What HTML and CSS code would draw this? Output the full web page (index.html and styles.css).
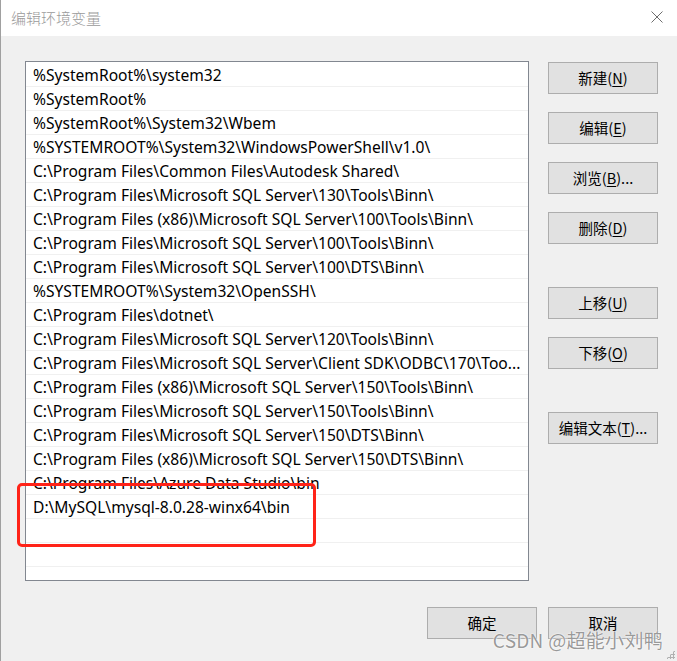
FILE: index.html
```html
<!DOCTYPE html>
<html lang="zh-CN">
<head>
<meta charset="utf-8">
<title>编辑环境变量</title>
<link rel="stylesheet" href="styles.css">
</head>
<body>
<div class="window">
  <div class="titlebar">
    <span class="title">编辑环境变量</span>
    <svg class="close" width="12" height="12" viewBox="0 0 12 12"><path d="M0.5 0.5 L11.5 11.5 M11.5 0.5 L0.5 11.5" stroke="#6e6e6e" stroke-width="1" fill="none"/></svg>
  </div>
  <div class="content">
    <div class="main">
      <div class="list">
        <div class="row">%SystemRoot%\system32</div>
        <div class="row">%SystemRoot%</div>
        <div class="row">%SystemRoot%\System32\Wbem</div>
        <div class="row">%SYSTEMROOT%\System32\WindowsPowerShell\v1.0\</div>
        <div class="row">C:\Program Files\Common Files\Autodesk Shared\</div>
        <div class="row">C:\Program Files\Microsoft SQL Server\130\Tools\Binn\</div>
        <div class="row">C:\Program Files (x86)\Microsoft SQL Server\100\Tools\Binn\</div>
        <div class="row">C:\Program Files\Microsoft SQL Server\100\Tools\Binn\</div>
        <div class="row">C:\Program Files\Microsoft SQL Server\100\DTS\Binn\</div>
        <div class="row">%SYSTEMROOT%\System32\OpenSSH\</div>
        <div class="row">C:\Program Files\dotnet\</div>
        <div class="row">C:\Program Files\Microsoft SQL Server\120\Tools\Binn\</div>
        <div class="row">C:\Program Files\Microsoft SQL Server\Client SDK\ODBC\170\Too...</div>
        <div class="row">C:\Program Files (x86)\Microsoft SQL Server\150\Tools\Binn\</div>
        <div class="row">C:\Program Files\Microsoft SQL Server\150\Tools\Binn\</div>
        <div class="row">C:\Program Files\Microsoft SQL Server\150\DTS\Binn\</div>
        <div class="row">C:\Program Files (x86)\Microsoft SQL Server\150\DTS\Binn\</div>
        <div class="row">C:\Program Files\Azure Data Studio\bin</div>
        <div class="row">D:\MySQL\mysql-8.0.28-winx64\bin</div>
        <div class="row"></div>
        <div class="row"></div>
        <div class="row"></div>
      </div>
      <div class="side">
        <div class="group">
          <button class="btn">新建(<u>N</u>)</button>
          <button class="btn">编辑(<u>E</u>)</button>
          <button class="btn">浏览(<u>B</u>)...</button>
          <button class="btn">删除(<u>D</u>)</button>
        </div>
        <div class="group">
          <button class="btn">上移(<u>U</u>)</button>
          <button class="btn">下移(<u>O</u>)</button>
        </div>
        <div class="group">
          <button class="btn">编辑文本(<u>T</u>)...</button>
        </div>
      </div>
    </div>
    <div class="footer">
      <button class="btn">确定</button>
      <button class="btn">取消</button>
    </div>
  </div>
  <div class="highlight"></div>
  <div class="watermark">CSDN @超能小刘鸭</div>
  <div class="grip"></div>
</div>
</body>
</html>
```

FILE: styles.css
```css
* { box-sizing: border-box; }
html, body { margin: 0; padding: 0; }
body {
  width: 677px;
  height: 661px;
  overflow: hidden;
  background: #f0f0f0;
  font-family: "Noto Sans", "Noto Sans CJK SC", sans-serif;
}
.window {
  position: relative;
  width: 677px;
  height: 661px;
  background: #f0f0f0;
  border-left: 1px solid #a0a0a0;
}
.titlebar {
  height: 36px;
  background: #ffffff;
  display: flex;
  align-items: center;
  justify-content: space-between;
  padding: 0 14px 0 10px;
}
.title {
  font-family: "Noto Sans CJK SC", sans-serif;
  font-size: 15px;
  font-weight: 300;
  color: #9a9a9a;
  margin-top: -1px;
}
.close { margin-top: -2px; }
.content {
  padding: 25px 19px 0 24px;
}
.main {
  display: flex;
  gap: 19px;
}
.list {
  width: 504px;
  height: 520px;
  background: #ffffff;
  border: 1px solid #828790;
  padding-top: 1px;
  overflow: hidden;
}
.row {
  height: 24px;
  border-bottom: 1px solid #f0f0f0;
  padding: 0 4px 0 7px;
  font-size: 15.6px;
  line-height: 24px;
  color: #000;
  white-space: nowrap;
  overflow: hidden;
}
.side {
  display: flex;
  flex-direction: column;
  gap: 43px;
  padding-top: 1px;
}
.group {
  display: flex;
  flex-direction: column;
  gap: 18px;
}
.btn {
  width: 110px;
  height: 32px;
  background: #e1e1e1;
  border: 1px solid #adadad;
  border-radius: 0;
  padding: 0;
  margin: 0;
  font-family: "Noto Sans CJK SC", sans-serif;
  font-size: 14.5px;
  color: #000;
  text-align: center;
  line-height: 30px;
}
.btn u { text-underline-offset: 2px; }
.footer {
  display: flex;
  justify-content: flex-end;
  gap: 11px;
  margin-top: 26px;
}
.highlight {
  position: absolute;
  left: 16px;
  top: 483px;
  width: 299px;
  height: 64px;
  border: 3px solid #ff2318;
  border-radius: 5px;
}
.watermark {
  position: absolute;
  right: 14px;
  top: 628px;
  font-family: "Noto Sans CJK SC", sans-serif;
  font-size: 19px;
  line-height: 24px;
  color: rgba(120, 120, 120, 0.75);
  text-shadow: 0 0 2px #ffffff, 0 0 1px #ffffff;
  letter-spacing: 0.3px;
}
.grip {
  position: absolute;
  right: 2px;
  bottom: 2px;
  width: 9px;
  height: 9px;
  background-image: radial-gradient(circle, #b0b0b0 1px, transparent 1.2px);
  background-size: 3px 3px;
  clip-path: polygon(100% 0, 100% 100%, 0 100%);
}
```
